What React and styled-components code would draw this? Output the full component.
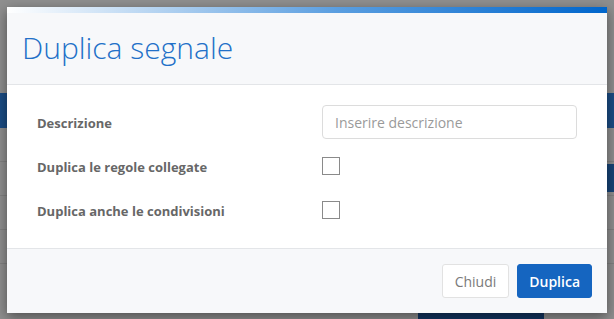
import React from "react";
import styled, { createGlobalStyle } from "styled-components";

const Global = createGlobalStyle`
  html, body { margin: 0; padding: 0; }
  body {
    width: 614px;
    height: 319px;
    overflow: hidden;
    background: #ffffff;
    font-family: "Open Sans", "Liberation Sans", sans-serif;
  }
`;

const Page = styled.div`
  position: relative;
  width: 614px;
  height: 319px;
  overflow: hidden;
  padding-top: 93px;
  box-sizing: border-box;
  background: #fff;
`;

const NavBar = styled.div`
  height: 35px;
  background: #3089ee;
`;

const PageRow = styled.div`
  height: 34px;
  border-bottom: 1px solid #e6e6e6;
  box-sizing: border-box;
  display: flex;
  justify-content: flex-end;
`;

const RowTag = styled.div`
  width: 10px;
  margin-top: 2px;
  height: 28px;
  background: #2a79d4;
`;

const PageFooter = styled.div`
  display: flex;
  justify-content: flex-end;
  padding-right: 70px;
  margin-top: 38px;
`;

const PageButton = styled.div`
  width: 126px;
  height: 40px;
  background: #1f5fae;
`;

const Backdrop = styled.div`
  position: absolute;
  inset: 0;
  background: rgba(0, 0, 0, 0.44);
`;

const Dialog = styled.div`
  position: absolute;
  top: 7px;
  left: 7px;
  width: 600px;
  background: #fff;
  box-shadow: 0 4px 12px rgba(0, 0, 0, 0.45);
  display: flex;
  flex-direction: column;
`;

const Accent = styled.div`
  height: 6px;
  background: linear-gradient(to right, #ffffff 0%, #5a9ee0 55%, #0066cc 100%);
`;

const Header = styled.div`
  height: 72px;
  box-sizing: border-box;
  background: #f7f8fa;
  border-bottom: 1px solid #e3e5e8;
  display: flex;
  align-items: center;
  padding-left: 15px;
`;

const Title = styled.h4`
  margin: 0;
  font-family: "Open Sans", "Liberation Sans", sans-serif;
  font-weight: 300;
  font-size: 30px;
  color: #2270c8;
  line-height: 1;
  padding-bottom: 2px;
`;

const Body = styled.div`
  padding: 20px 30px 21px;
  display: grid;
  grid-template-columns: 285px 1fr;
  grid-auto-rows: 34px;
  row-gap: 10px;
  align-items: center;
`;

const Label = styled.label`
  font-size: 13px;
  font-weight: 700;
  color: #676767;
  padding-top: 1px;
`;

const Input = styled.input`
  box-sizing: border-box;
  width: 100%;
  height: 34px;
  border: 1px solid #dcdcdc;
  border-radius: 4px;
  padding: 0 12px;
  font-family: "Open Sans", "Liberation Sans", sans-serif;
  font-size: 14px;
  color: #333;
  outline: none;
  &::placeholder { color: #9a9a9a; }
`;

const Check = styled.span`
  display: block;
  width: 18px;
  height: 18px;
  box-sizing: border-box;
  border: 1px solid #8a8a8a;
  background: #fff;
`;

const Footer = styled.div`
  background: #f7f8fa;
  border-top: 1px solid #e3e5e8;
  padding: 15px;
  display: flex;
  justify-content: flex-end;
  gap: 8px;
`;

const Button = styled.button`
  height: 34px;
  box-sizing: border-box;
  padding: 0 ${(p) => (p.$primary ? "11px" : "12px")};
  border-radius: 3px;
  font-family: "Open Sans", "Liberation Sans", sans-serif;
  font-size: 14px;
  cursor: pointer;
  border: 1px solid ${(p) => (p.$primary ? "#1565c0" : "#e2e2e2")};
  background: ${(p) => (p.$primary ? "#1565c0" : "#ffffff")};
  color: ${(p) => (p.$primary ? "#ffffff" : "#7a7a7a")};
  font-weight: ${(p) => (p.$primary ? 600 : 400)};
`;

export default function App() {
  return (
    <>
      <Global />
      <Page>
        <NavBar />
        <PageRow />
        <PageRow>
          <RowTag />
        </PageRow>
        <PageRow />
        <PageRow />
        <PageFooter>
          <PageButton />
        </PageFooter>
        <Backdrop />
        <Dialog>
          <Accent />
          <Header>
            <Title>Duplica segnale</Title>
          </Header>
          <Body>
            <Label>Descrizione</Label>
            <Input placeholder="Inserire descrizione" />
            <Label>Duplica le regole collegate</Label>
            <Check />
            <Label>Duplica anche le condivisioni</Label>
            <Check />
          </Body>
          <Footer>
            <Button>Chiudi</Button>
            <Button $primary>Duplica</Button>
          </Footer>
        </Dialog>
      </Page>
    </>
  );
}
